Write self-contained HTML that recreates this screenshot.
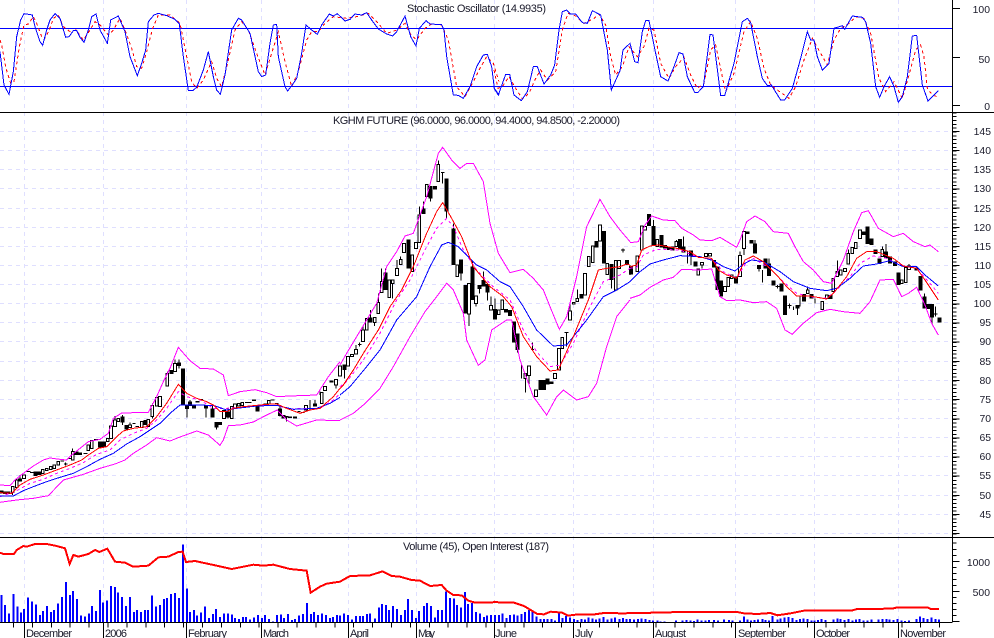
<!DOCTYPE html>
<html><head><meta charset="utf-8"><style>
html,body{margin:0;padding:0;background:#fff}
svg{display:block;font-family:"Liberation Sans",Arial,sans-serif}
.c *{vector-effect:non-scaling-stroke;shape-rendering:crispEdges}
polyline{fill:none}
text{font-size:11px;fill:#1a1a2a}
.a text{font-size:10.4px}
.g{stroke:#dfdfff;stroke-dasharray:4 4;stroke-width:1}
.k{fill:none;stroke:#000;stroke-width:1}
.b{fill:none;stroke:#000;stroke-width:4}
.h{fill:#fff;stroke:#000;stroke-width:1}
.ub{stroke:#f0f;stroke-width:1}
.md{stroke:#f0f;stroke-width:1;stroke-dasharray:3 3}
.rd{stroke:#f00;stroke-width:1}
.bl{stroke:#00f;stroke-width:1}
.vo{stroke:#00f;stroke-width:2;fill:none}
.oi{stroke:#f00;stroke-width:2}
</style></head><body>
<svg width="994" height="638" viewBox="0 0 994 638" xmlns="http://www.w3.org/2000/svg"><g class="c">
<rect width="994" height="638" fill="#fff"/>
<!-- vertical grid -->
<path class="g" fill="none" d="M24.5 0V622M103.5 0V622M186.5 0V622M261.5 0V622M348.5 0V622M416.5 0V622M494.5 0V622M573.5 0V622M653.5 0V622M735.5 0V622M814.5 0V622M898.5 0V622"/>
<!-- horizontal grid -->
<path class="g" fill="none" d="M0 131.5H952M0 150.5H952M0 169.5H952M0 188.5H952M0 208.5H952M0 227.5H952M0 246.5H952M0 265.5H952M0 284.5H952M0 303.5H952M0 322.5H952M0 341.5H952M0 361.5H952M0 380.5H952M0 399.5H952M0 418.5H952M0 437.5H952M0 456.5H952M0 475.5H952M0 495.5H952M0 514.5H952M0 533.5H952"/>

<!-- stochastic -->
<path d="M0 28.5H952M0 86.5H952" stroke="#00f" fill="none"/>
<g transform="scale(.33333)">
<polyline stroke="#f00" stroke-dasharray="3 3" points="0,120 5,135 18,205 32,250 42,245 58,140 72,75 85,72 100,50 110,70 125,110 133,118 148,90 160,55 175,45 190,80 210,95 228,90 250,120 270,90 285,65 300,75 325,105 340,90 360,55 375,90 395,145 410,200 425,205 440,155 458,85 475,45 510,45 540,70 555,145 575,245 590,265 610,240 635,185 650,235 665,260 685,180 705,90 725,65 745,90 770,160 795,225 815,160 835,95 855,185 875,260 895,215 920,120 935,95 955,95 975,70 1000,50 1040,55 1070,50 1105,40 1130,65 1160,100 1190,90 1215,70 1230,100 1250,120 1275,85 1295,72 1325,75 1345,120 1370,260 1395,290 1420,245 1440,205 1460,170 1480,190 1497,245"/>
<polyline stroke="#00f" points="0,155 12,255 27,283 40,215 50,110 62,60 72,41 85,43 97,45 105,80 120,125 128,136 140,90 150,60 165,41 180,55 197,112 207,110 220,92 230,92 240,112 252,127 265,90 275,50 288,42 300,90 322,130 332,60 355,48 375,95 390,170 412,227 425,190 437,150 445,65 462,45 475,40 500,47 525,58 538,72 550,170 565,272 578,272 590,262 610,210 625,155 640,230 650,270 661,283 675,225 695,90 715,55 725,60 750,100 775,215 785,230 797,225 810,130 820,75 830,73 835,170 855,260 863,273 880,250 890,235 905,160 918,75 935,90 952,103 965,75 988,42 1000,48 1012,41 1035,63 1050,58 1065,42 1085,45 1100,38 1115,60 1135,87 1160,102 1178,108 1190,95 1215,48 1232,110 1248,138 1258,85 1278,62 1290,72 1325,74 1332,90 1340,170 1360,285 1375,286 1390,295 1410,260 1430,200 1450,165 1462,163 1475,200 1483,265 1497,285"/>
</g>
<g transform="translate(494,0) scale(.33333)">
<polyline stroke="#f00" stroke-dasharray="3 3" points="0,210 12,265 25,260 45,230 65,265 85,297 105,280 125,235 140,210 160,240 185,215 205,90 222,40 245,48 270,70 300,55 315,42 335,75 350,170 365,225 385,200 405,140 430,170 450,140 465,85 480,90 500,190 525,235 545,200 570,172 590,225 610,265 630,250 650,150 665,135 685,230 695,275 720,220 750,95 770,65 790,115 810,205 830,255 850,270 885,295 905,260 930,180 955,115 980,160 1000,195 1020,120 1040,85 1065,70 1085,50 1110,55 1130,100 1155,235 1175,275 1200,245 1225,295 1245,225 1265,150 1280,135 1290,170 1300,265 1315,285 1330,290"/>
<polyline stroke="#00f" points="0,265 13,285 35,223 47,223 60,285 82,302 100,275 118,200 130,200 150,252 170,225 182,195 195,90 205,35 218,30 230,42 245,42 265,68 280,70 295,32 320,45 340,150 352,270 378,212 387,150 408,130 422,185 432,188 445,95 455,62 465,62 485,160 500,230 522,243 540,200 555,158 567,162 580,230 602,277 612,277 628,260 648,103 657,105 680,287 692,287 720,190 745,65 760,55 770,68 790,170 805,235 820,257 832,255 860,300 872,300 895,265 920,175 940,95 950,120 960,120 970,170 985,210 1005,190 1020,85 1045,77 1052,88 1075,48 1105,52 1115,65 1130,130 1145,260 1157,292 1170,260 1187,230 1200,260 1213,307 1225,290 1240,230 1255,108 1268,106 1285,255 1302,303 1320,285 1333,272"/>
</g>

<!-- ZONE A: left price -->
<g transform="translate(0,340) scale(.33333)">
<path class="k" d="M50 415V445M60 405V420M218 325V340M345 228V245M368 225V255M390 248V262M457 190V235M502 95V105M525 58V75M537 58V85M561 207V232M618 205V233M570 180V190M638 198V210M650 262V268M930 180V210M945 180V190M960 155V165M38 458V465M684 205V235M840 195V230M860 232V245M80 395H92M90 398H100M192 372H202M197 367V377M205 355H215M182 363H192M250 340H262M282 298H294M397 250H407M407 260H417M735 187H755M790 192H802M825 190H835M812 180H824M892 215H902M903 218H913"/>
<path class="b" d="M5 452V460M15 455V462M25 455V462M60 415V425M107 395V408M118 395V405M230 335V345M240 338V345M300 305V322M312 305V322M368 230V248M380 255V268M437 240V255M537 68V78M549 85V195M561 197V207M570 185V198M582 197V205M618 197V205M638 205V232M650 246V262M660 246V255M684 215V233M762 178V183M772 200V214M840 205V228M850 225V235M860 228V233M870 230V234M885 230V235M945 190V200M515 90V102M593 183V188M603 177V180"/>
<path class="h" d="M34 440h8V458h-8zM46 420h8V442h-8zM68 405h8V415h-8zM124 388h8V400h-8zM136 385h8V392h-8zM148 380h8V388h-8zM159 375h8V385h-8zM171 365h8V375h-8zM214 335h8V360h-8zM261 315h8V332h-8zM271 302h8V325h-8zM319 295h8V305h-8zM329 258h8V295h-8zM341 240h8V260h-8zM351 235h8V245h-8zM386 255h8V262h-8zM421 245h8V262h-8zM441 238h8V260h-8zM453 197h8V230h-8zM466 172h8V198h-8zM476 170h8V200h-8zM498 100h8V138h-8zM521 70h8V95h-8zM668 212h8V235h-8zM691 200h8V235h-8zM701 192h8V205h-8zM712 190h8V198h-8zM723 188h8V196h-8zM802 182h8V192h-8zM914 197h8V210h-8zM961 158h8V190h-8zM971 140h8V152h-8z"/>
</g>
<!-- ZONE B: middle price -->
<g transform="translate(330,130) scale(.33333)">
<path class="k" d="M18 765V775M44 720V745M78 645V658M89 638V650M84 643H94M99 590V600M122 540V562M134 578V588M145 490V517M155 415V455M167 415V428M188 460V505M201 390V415M212 380V388M268 230V255M280 215V235M302 205V215M325 92V103M338 127V160M333 127H344M349 245V265M370 280V295M393 430V452M417 552V588M427 395V410M438 520V530M449 477V490M460 425V450M472 487V512M483 500V527M495 505V537M563 660V668M575 703V745M586 745V788M597 737V765M607 637V660M603 658H612M710 607V650M704 607H716M720 520V543M742 478V505M879 355V368M873 360H885M900 405V435M845 450V475"/>
<path class="b" d="M5 752V758M44 703V720M122 562V578M167 428V480M235 328V415M280 235V252M302 168V205M315 168V178M349 145V245M370 295V405M393 388V430M407 465V550M427 410V510M449 465V477M460 450V470M472 462V487M495 537V568M528 537V547M540 540V558M552 575V637M563 610V660M632 750V780M642 750V780M652 745V763M665 755V762M754 492V505M800 333V352M822 303V400M845 402V450M891 390V405"/>
<path class="h" d="M14 748h8V765h-8zM26 708h8V738h-8zM50 680h8V708h-8zM62 673h8V680h-8zM74 658h8V672h-8zM95 600h8V635h-8zM106 566h8V600h-8zM130 562h8V578h-8zM141 517h8V550h-8zM151 455h8V487h-8zM174 450h8V503h-8zM184 450h8V460h-8zM197 415h8V437h-8zM208 388h8V403h-8zM218 340h8V367h-8zM243 375h8V425h-8zM254 337h8V355h-8zM264 255h8V337h-8zM286 163h8V200h-8zM321 103h8V155h-8zM378 405h8V440h-8zM413 460h8V552h-8zM434 498h8V520h-8zM479 527h8V540h-8zM502 540h8V553h-8zM513 510h8V538h-8zM582 730h8V745h-8zM593 708h8V737h-8zM614 780h8V800h-8zM671 730h8V745h-8zM683 655h8V720h-8zM693 622h8V655h-8zM716 543h8V570h-8zM727 517h8V522h-8zM738 505h8V515h-8zM761 430h8V495h-8zM772 380h8V410h-8zM784 348h8V398h-8zM806 285h8V333h-8zM828 400h8V433h-8zM853 392h8V480h-8zM863 392h8V415h-8z"/>
</g>
<!-- ZONE C: right price -->
<g transform="translate(630,190) scale(.33333)">
<path class="k" d="M70 90V108M139 150V155M160 140V170M172 185V220M183 200V225M216 225V235M330 185V197M342 175V195M375 150V160M387 237V245M398 240V278M417 205V220M442 285V295M436 290H448M478 340V355M472 347H484M490 350V360M502 355V375M510 320V350M533 290V300M555 325V340M622 212V245M655 178V190M757 170V178M768 162V185M837 222V228M843 230H853M884 310V320M906 382V400M917 350V380M912 372H922"/>
<path class="b" d="M3 228V253M57 72V108M70 108V168M94 135V172M105 165V175M117 170V180M128 170V182M150 147V178M160 170V188M183 182V200M196 215V230M252 210V232M262 230V300M273 272V320M318 260V280M352 125V132M364 150V160M375 160V190M387 225V237M407 205V235M417 220V258M430 272V287M455 280V305M465 317V375M502 345V355M522 312V335M545 312V325M602 315V327M700 125V135M713 110V162M725 145V165M737 178V192M748 205V222M768 185V205M780 200V220M795 215V228M805 247V285M860 232V242M872 258V302M884 320V355M895 342V357M906 342V382M928 382V398"/>
<path class="h" d="M18 198h8V245h-8zM31 108h8V180h-8zM41 110h8V120h-8zM78 148h8V170h-8zM135 155h8V170h-8zM201 237h8V255h-8zM212 218h8V225h-8zM224 190h8V200h-8zM236 190h8V198h-8zM281 290h8V305h-8zM291 262h8V290h-8zM301 255h8V265h-8zM326 197h8V260h-8zM338 125h8V175h-8zM529 300h8V310h-8zM573 335h8V358h-8zM586 315h8V325h-8zM606 265h8V305h-8zM618 245h8V260h-8zM628 240h8V255h-8zM641 235h8V245h-8zM651 190h8V222h-8zM663 173h8V190h-8zM673 157h8V175h-8zM686 120h8V145h-8zM753 178h8V200h-8zM811 270h8V280h-8zM823 232h8V278h-8zM833 228h8V238h-8z"/>
</g>

<!-- price indicator curves -->
<g transform="translate(0,340) scale(.33333)">
<polyline class="ub" points="0,435 30,437 45,420 70,400 100,378 130,360 150,354 180,358 200,360 215,345 240,325 265,305 300,298 325,280 340,235 365,219 445,217 470,170 490,125 510,85 535,22 570,62 600,85 640,87 670,105 685,167 720,155 765,149 800,158 830,170 870,168 950,165 985,110 1020,65"/>
<polyline class="ub" points="0,487 50,480 100,475 145,467 190,420 250,403 300,385 345,372 375,360 400,340 440,315 470,293 510,303 540,291 590,273 625,285 660,316 670,300 685,257 720,255 760,246 800,225 832,210 860,240 890,258 950,240 1020,242"/>
<polyline class="md" points="0,470 45,455 90,430 130,418 170,400 210,385 250,368 290,343 330,330 360,300 400,280 440,265 470,240 500,205 535,155 560,170 600,180 640,205 680,205 720,202 770,197 830,197 870,207 930,205 960,205 1000,180 1020,160"/>
<polyline class="bl" points="0,468 40,468 70,452 100,440 140,425 180,412 220,400 260,380 300,358 340,340 380,312 420,290 450,270 480,250 510,220 540,195 640,196 680,210 710,205 770,198 830,196 880,208 950,205 990,190 1020,172"/>
<polyline class="rd" points="0,458 35,460 60,435 90,418 130,405 170,390 210,375 245,360 265,345 295,325 320,320 350,290 370,273 400,265 440,260 470,230 500,190 535,133 560,160 590,175 620,185 640,195 660,215 680,215 700,205 730,200 760,197 800,193 830,192 860,205 900,220 930,210 960,205 1000,170 1020,145"/>
</g>
<g transform="translate(330,130) scale(.33333)">
<polyline class="ub" points="30,705 50,670 80,620 110,570 140,520 170,410 200,365 225,318 250,310 290,200 325,70 338,52 365,90 390,115 410,100 430,100 460,155 480,280 505,370 540,428 580,418 610,445 640,480 660,530 688,598 710,560 740,440 770,290 810,208 840,260 870,300 900,335"/>
<polyline class="ub" points="30,870 70,850 100,825 150,775 190,710 240,620 285,545 320,500 350,460 370,480 400,550 410,630 445,706 465,690 485,600 530,570 545,570 570,690 610,800 650,855 680,800 700,780 740,810 775,800 800,760 830,650 860,560 900,510"/>
<polyline class="md" points="30,770 50,755 100,690 150,610 200,510 240,450 290,350 320,295 350,265 370,290 400,360 440,420 490,470 540,510 580,600 620,665 660,710 690,705 730,640 780,530 820,455 870,435 900,415"/>
<polyline class="bl" points="30,795 60,770 110,710 150,660 200,570 260,500 300,410 335,345 355,337 385,350 440,405 470,420 510,455 540,470 580,530 620,600 670,648 710,645 770,570 820,500 860,480 900,455"/>
<polyline class="rd" points="30,775 40,765 70,720 100,670 145,600 180,530 215,480 250,410 290,310 320,245 338,218 365,265 395,320 430,410 480,470 520,500 545,530 580,620 620,680 660,723 685,720 730,620 775,510 805,420 830,415 870,410 890,402 900,405"/>
</g>
<g transform="translate(630,190) scale(.33333)">
<polyline class="ub" points="0,158 25,155 45,105 65,78 100,90 135,92 155,115 190,135 210,150 245,152 270,142 300,160 320,172 330,150 350,95 375,78 405,95 430,125 475,130 495,170 520,215 550,240 580,275 605,280 640,210 670,125 695,68 715,62 745,115 790,140 820,130 850,155 885,170 900,165 925,185"/>
<polyline class="ub" points="0,325 30,315 60,292 100,270 130,262 155,238 205,240 245,237 270,320 290,332 330,330 370,338 410,335 440,355 465,420 487,433 520,400 560,368 600,358 640,365 690,370 720,335 750,270 790,268 815,320 835,310 860,292 885,345 905,400 925,435"/>
<polyline class="md" points="0,235 20,232 40,195 80,178 150,180 200,200 250,210 280,245 320,265 350,215 370,205 420,235 460,275 500,310 540,320 590,325 620,300 660,260 690,220 730,198 770,205 810,225 860,235 900,280 925,310"/>
<polyline class="bl" points="0,275 30,245 60,222 100,210 150,197 210,200 250,212 280,230 315,243 340,222 365,210 400,215 450,245 490,275 540,295 590,302 620,295 660,265 700,228 740,222 780,212 820,230 860,230 885,255 925,288"/>
<polyline class="rd" points="0,230 20,225 35,180 60,168 85,165 140,175 180,185 205,202 245,205 265,240 290,255 320,265 345,210 370,198 400,215 440,255 470,290 500,318 540,318 590,327 610,310 650,260 680,205 710,185 740,185 790,205 820,228 860,235 885,270 925,330"/>
</g>

<!-- volume -->
<g transform="translate(0,530) scale(.33333)">
<path class="vo" d="M5 277V195M15 277V225M27 277V250M41 277V192M52 277V230M63 277V247M72 277V237M84 277V202M96 277V214M108 277V223M120 277V255M129 277V243M141 277V228M153 277V246M162 277V240M174 277V220M186 277V201M198 277V156M210 277V195M219 277V183M231 277V207M243 277V256M255 277V260M267 277V250M276 277V228M288 277V243M300 277V180M309 277V218M321 277V211M333 277V168M345 277V171M354 277V187M366 277V201M378 277V228M390 277V201M402 277V246M411 277V240M423 277V246M435 277V240M444 277V240M456 277V196M468 277V230M480 277V225M492 277V207M501 277V204M513 277V192M525 277V189M537 277V204M549 277V43M561 277V175M570 277V246M582 277V240M591 277V256M603 277V248M615 277V229M627 277V264M639 277V252M648 277V237M660 277V261M672 277V250M684 277V250M696 277V253M705 277V264M717 277V267M729 277V261M738 277V261M750 277V268M762 277V262M774 277V255M786 277V264M795 277V255M807 277V267M819 277V275M831 277V255M843 277V253M852 277V264M864 277V252M876 277V270M885 277V267M897 277V256M909 277V252M921 277V219M933 277V252M942 277V246M954 277V255M966 277V250M978 277V255M990 277V264M999 277V261M1011 277V255M1020 277V256M1032 277V250M1044 277V255M1056 277V268M1068 277V258M1080 277V258M1089 277V258M1101 277V252M1110 277V250M1125 277V265M1137 277V232M1146 277V222M1158 277V225M1167 277V240M1179 277V228M1191 277V237M1203 277V255M1215 277V240M1224 277V207M1236 277V240M1248 277V264M1257 277V243M1272 277V228M1281 277V219M1293 277V228M1305 277V262M1314 277V240M1326 277V240M1338 277V185M1350 277V204M1362 277V206M1371 277V225M1383 277V232M1395 277V186M1404 277V222M1416 277V219M1428 277V246M1440 277V250M1452 277V261M1461 277V256M1473 277V255M1485 277V255"/>
<polyline class="oi" points="0,68 10,72 42,72 50,60 70,48 80,50 105,42 140,42 170,48 195,55 209,102 220,75 235,80 265,72 285,60 298,66 322,56 345,95 375,98 400,110 445,107 475,82 505,80 535,66 548,65 558,96 585,93 650,107 695,117 760,104 790,107 820,104 870,117 920,122 932,188 960,170 980,161 1020,155 1050,138 1110,136 1148,124 1175,138 1200,140 1235,150 1260,152 1290,168 1325,165 1340,182 1360,195 1385,196 1405,212 1425,218 1475,217 1490,216"/>
</g>
<g transform="translate(494,530) scale(.33333)">
<path class="vo" d="M3 277V255M15 277V255M26 277V250M37 277V264M48 277V255M60 277V253M71 277V256M83 277V252M93 277V246M105 277V240M116 277V243M127 277V260M139 277V267M150 277V267M161 277V267M172 277V267M183 277V272M195 277V250M205 277V264M216 277V258M228 277V262M240 277V267M250 277V270M262 277V267M273 277V268M284 277V262M295 277V265M306 277V268M317 277V265M329 277V261M341 277V268M352 277V265M363 277V262M376 277V267M387 277V264M398 277V267M408 277V267M420 277V268M432 277V267M443 277V265M455 277V267M466 277V270M477 277V272M490 277V272M500 277V274M512 277V274M546 277V271M565 277V272M578 277V270M590 277V272M600 277V273M611 277V268M622 277V272M634 277V272M645 277V270M660 277V270M672 277V272M690 277V268M705 277V270M715 277V272M738 277V272M750 277V259M760 277V268M771 277V271M781 277V270M792 277V268M805 277V267M815 277V270M825 277V272M836 277V258M850 277V268M860 277V265M872 277V262M883 277V261M895 277V264M908 277V270M918 277V267M928 277V265M940 277V267M952 277V272M962 277V272M972 277V270M983 277V267M995 277V270M1018 277V268M1030 277V265M1040 277V267M1052 277V270M1063 277V267M1075 277V271M1086 277V268M1097 277V267M1108 277V272M1120 277V272M1132 277V268M1153 277V268M1165 277V267M1177 277V267M1187 277V268M1198 277V270M1211 277V267M1222 277V271M1233 277V273M1245 277V272M1267 277V267M1278 277V260M1289 277V264M1300 277V267M1313 277V263M1325 277V267M1335 277V268"/>
<polyline class="oi" points="0,215 20,218 60,218 90,228 110,240 130,252 150,253 170,245 205,248 222,257 245,254 295,254 330,249 385,250 440,249 565,246 640,246 730,246 750,250 790,252 830,249 850,256 890,250 930,242 1075,241 1090,237 1195,236 1210,232 1265,232 1300,232 1310,237 1335,237"/>
</g>

<!-- frame and axes -->
<path d="M0 112.5H994M0 537.5H994M0 622.5H952.5M952.5 0V622" stroke="#000" fill="none"/>
<!-- right ticks -->
<path d="M953 8.5H960M953 57.5H960M953 105.5H960" stroke="#000" fill="none"/>
<line x1="954.5" x2="954.5" y1="112.35" y2="537" stroke="#000" stroke-width="4" stroke-dasharray="1 2.83"/>
<line x1="956" x2="956" y1="131" y2="537" stroke="#000" stroke-width="7" stroke-dasharray="1 18.15"/>
<line x1="954.5" x2="954.5" y1="622" y2="538" stroke="#000" stroke-width="4" stroke-dasharray="1 5.02"/>
<line x1="956" x2="956" y1="622" y2="538" stroke="#000" stroke-width="7" stroke-dasharray="1 29.1"/>
<!-- bottom ticks -->
<line x1="13" x2="945" y1="625" y2="625" stroke="#000" stroke-width="5" stroke-dasharray="1 17.9"/>
<path d="M24.5 622V638M103.5 622V638M186.5 622V638M261.5 622V638M348.5 622V638M416.5 622V638M494.5 622V638M573.5 622V638M653.5 622V638M735.5 622V638M814.5 622V638M898.5 622V638" stroke="#000" fill="none"/>
</g>
<!-- text -->
<text x="407" y="12" textLength="139" lengthAdjust="spacing">Stochastic Oscillator (14.9935)</text>
<text x="333" y="124" textLength="287" lengthAdjust="spacing">KGHM FUTURE (96.0000, 96.0000, 94.4000, 94.8500, -2.20000)</text>
<text x="403" y="550" textLength="146" lengthAdjust="spacing">Volume (45), Open Interest (187)</text>
<g text-anchor="end" class="a">
<text x="990" y="13">100</text><text x="990" y="63">50</text><text x="990" y="110">0</text>
<text x="991" y="135">145</text><text x="991" y="154">140</text><text x="991" y="173">135</text><text x="991" y="192">130</text><text x="991" y="212">125</text><text x="991" y="231">120</text><text x="991" y="250">115</text><text x="991" y="269">110</text><text x="991" y="288">105</text><text x="991" y="307">100</text><text x="991" y="326">95</text><text x="991" y="345">90</text><text x="991" y="365">85</text><text x="991" y="384">80</text><text x="991" y="403">75</text><text x="991" y="422">70</text><text x="991" y="441">65</text><text x="991" y="460">60</text><text x="991" y="479">55</text><text x="991" y="499">50</text><text x="991" y="518">45</text>
<text x="990" y="566">1000</text><text x="990" y="596">500</text>
</g>
<text x="26" y="637" textLength="46">December</text>
<text x="105" y="637" textLength="22">2006</text>
<text x="188" y="637" textLength="39">February</text>
<text x="263" y="637" textLength="26">March</text>
<text x="350" y="637" textLength="19">April</text>
<text x="418" y="637" textLength="17">May</text>
<text x="495" y="637" textLength="22">June</text>
<text x="575" y="637" textLength="18">July</text>
<text x="655" y="637" textLength="31">August</text>
<text x="738" y="637" textLength="48">September</text>
<text x="816" y="637" textLength="34">October</text>
<text x="900" y="637" textLength="46">November</text>
</svg>
</body></html>
